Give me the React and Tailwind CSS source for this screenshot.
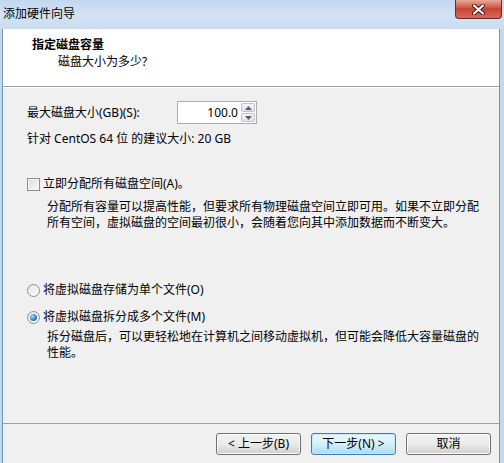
import React from 'react';

const font = { fontFamily: '"Noto Sans", "Noto Sans CJK SC", sans-serif' };

// Win7 style push button
const Btn = ({ children, primary }) => (
    <button
        className={`w-[85px] h-[22px] rounded-[3px] border text-[12px] leading-none text-black ${
            primary
                ? 'border-[#3c7fb1] bg-gradient-to-b from-[#eaf6fd] via-[#d9f0fc] to-[#a7d9f5] shadow-[inset_0_0_0_1px_#c9e9fb]'
                : 'border-[#707070] bg-gradient-to-b from-[#f2f2f2] via-[#ebebeb] to-[#cfcfcf] shadow-[inset_0_0_0_1px_#fcfcfc]'
        }`}
    >
        {children}
    </button>
);

const SpinBox = ({ value }) => (
    <div className="flex w-[80px] h-[23px] border border-[#abadb3] bg-white">
        <div className="flex-1 flex items-center justify-end pr-[2px] text-[12px]">{value}</div>
        <div className="w-[16px] flex flex-col gap-[1px] p-[1px]">
            <div className="flex-1 flex items-center justify-center border border-[#c3c3c3] rounded-[2px] bg-gradient-to-b from-[#f4f4f4] to-[#e4e4e4]">
                <svg width="7" height="4" viewBox="0 0 7 4"><path d="M0 4 L3.5 0 L7 4 Z" fill="#4d6185" /></svg>
            </div>
            <div className="flex-1 flex items-center justify-center border border-[#c3c3c3] rounded-[2px] bg-gradient-to-b from-[#f4f4f4] to-[#e4e4e4]">
                <svg width="7" height="4" viewBox="0 0 7 4"><path d="M0 0 L3.5 4 L7 0 Z" fill="#4d6185" /></svg>
            </div>
        </div>
    </div>
);

const Radio = ({ checked }) => (
    <span className="w-[13px] h-[13px] rounded-full border border-[#8e8f8f] bg-gradient-to-br from-[#e4e4e4] to-[#ffffff] flex items-center justify-center">
        {checked && (
            <span className="w-[7px] h-[7px] rounded-full bg-[radial-gradient(circle_at_35%_35%,#9fd6f8,#1f6fb8_70%)]" />
        )}
    </span>
);

export default function App() {
    return (
        <div className="w-[504px] h-[463px] flex flex-col bg-[#c4d8ef] overflow-hidden text-black" style={font}>
            {/* title bar */}
            <div className="h-[29px] flex items-start justify-between bg-gradient-to-b from-[#c2d7ef] via-[#d3e3f5] to-[#cbdcf0]">
                <span className="pl-[3px] pt-[6px] text-[12px] leading-[16px] text-black">添加硬件向导</span>
                <div className="mr-[2px] w-[47px] h-[19px] rounded-b-[4px] border border-t-0 border-[#6b2a22] bg-gradient-to-b from-[#e9a99b] via-[#c7452f] to-[#d9695a] flex items-center justify-center">
                    <svg width="13" height="11" viewBox="0 0 13 11">
                        <path d="M2 1.5 L11 9.5 M11 1.5 L2 9.5" stroke="#3a1a16" strokeWidth="4" strokeLinecap="round" />
                        <path d="M2 1.5 L11 9.5 M11 1.5 L2 9.5" stroke="#ffffff" strokeWidth="2.2" strokeLinecap="round" />
                    </svg>
                </div>
            </div>

            {/* client area */}
            <div className="flex-1 flex flex-col ml-[2px] mr-[4px] border-x border-[#7b93b5] bg-[#f0f0f0]">
                {/* header */}
                <div className="h-[58px] bg-white border-b border-[#a0a0a0] pl-[29px] pt-[8px]">
                    <div className="text-[12px] leading-[16px] font-bold">指定磁盘容量</div>
                    <div className="pl-[26px] text-[12px] leading-[16px] mt-[1px]">磁盘大小为多少?</div>
                </div>

                {/* body */}
                <div className="flex-1 border-t border-white pl-[24px] pr-[14px] text-[12px]">
                    <div className="mt-[13px] flex items-center h-[23px]">
                        <span className="w-[150px] leading-[16px]">最大磁盘大小(GB)(S):</span>
                        <SpinBox value="100.0" />
                    </div>
                    <div className="mt-[7px] leading-[16px]">针对 CentOS 64 位 的建议大小: 20 GB</div>

                    <div className="mt-[29px] flex items-center gap-[3px] h-[16px]">
                        <span className="w-[13px] h-[13px] border border-[#8e8f8f] bg-gradient-to-br from-[#dcdcdc] to-[#fbfbfb] shadow-[inset_0_0_0_1px_#f4f4f4]" />
                        <span className="leading-[16px]">立即分配所有磁盘空间(A)。</span>
                    </div>
                    <div className="pl-[20px] mt-[7px] leading-[16px]">
                        <div>分配所有容量可以提高性能，但要求所有物理磁盘空间立即可用。如果不立即分配</div>
                        <div>所有空间，虚拟磁盘的空间最初很小，会随着您向其中添加数据而不断变大。</div>
                    </div>

                    <div className="mt-[51px] flex items-center gap-[3px] h-[16px]">
                        <Radio />
                        <span className="leading-[16px]">将虚拟磁盘存储为单个文件(O)</span>
                    </div>
                    <div className="mt-[11px] flex items-center gap-[3px] h-[16px]">
                        <Radio checked />
                        <span className="leading-[16px]">将虚拟磁盘拆分成多个文件(M)</span>
                    </div>
                    <div className="pl-[20px] mt-[4px] leading-[16px]">
                        <div>拆分磁盘后，可以更轻松地在计算机之间移动虚拟机，但可能会降低大容量磁盘的</div>
                        <div>性能。</div>
                    </div>
                </div>

                {/* footer */}
                <div className="h-[40px] border-t border-[#a0a0a0] flex justify-end items-start gap-[10px] pt-[9px] pr-[8px]">
                    <Btn>&lt; 上一步(B)</Btn>
                    <Btn primary>下一步(N) &gt;</Btn>
                    <Btn>取消</Btn>
                </div>
            </div>
        </div>
    );
}
